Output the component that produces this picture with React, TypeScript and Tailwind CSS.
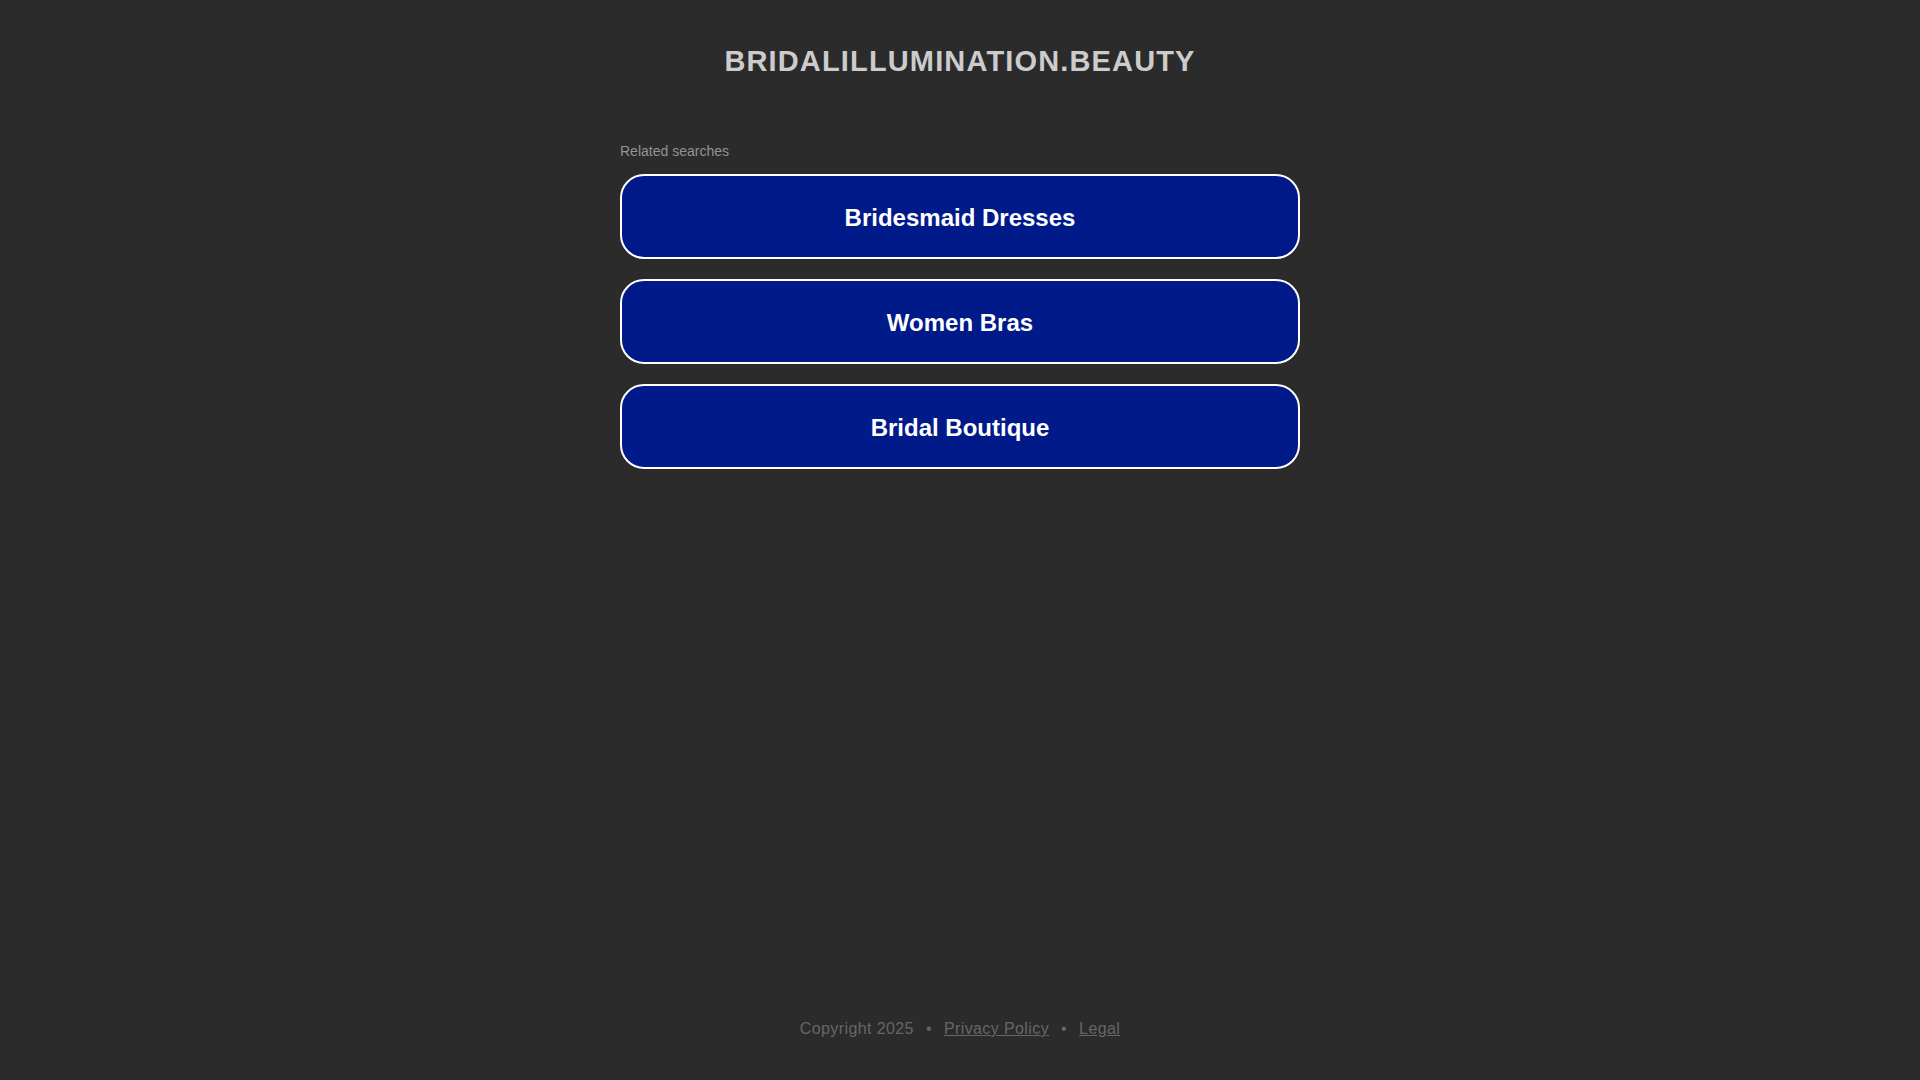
const searches = ['Bridesmaid Dresses', 'Women Bras', 'Bridal Boutique'];

export default function App() {
    return (
        <div className="h-screen w-full flex flex-col items-center bg-[#2b2b2b] font-['Liberation_Sans',Arial,sans-serif]">
            {/* Header */}
            <h1 className="pt-[45px] text-[29px] leading-[33px] font-bold tracking-[1.15px] text-[#cccccc]">
                BRIDALILLUMINATION.BEAUTY
            </h1>

            {/* Related searches */}
            <div className="w-[680px] mt-[65px]">
                <p className="text-[14px] leading-[16px] text-[#939393]">Related searches</p>
                <div className="mt-[15px] flex flex-col gap-[20px]">
                    {searches.map((s) => (
                        <a
                            key={s}
                            href="#"
                            className="h-[85px] w-full flex items-center justify-center pt-[2px] rounded-[24px] border-2 border-white bg-[#011a8a] text-white text-[24px] font-bold"
                        >
                            {s}
                        </a>
                    ))}
                </div>
            </div>

            {/* Footer */}
            <footer className="mt-auto pb-[42px] flex items-center gap-[12px] text-[16px] leading-[18px] tracking-[0.4px] text-[#666666]">
                <span>Copyright 2025</span>
                <span>•</span>
                <a href="#" className="underline">Privacy Policy</a>
                <span>•</span>
                <a href="#" className="underline">Legal</a>
            </footer>
        </div>
    );
}
